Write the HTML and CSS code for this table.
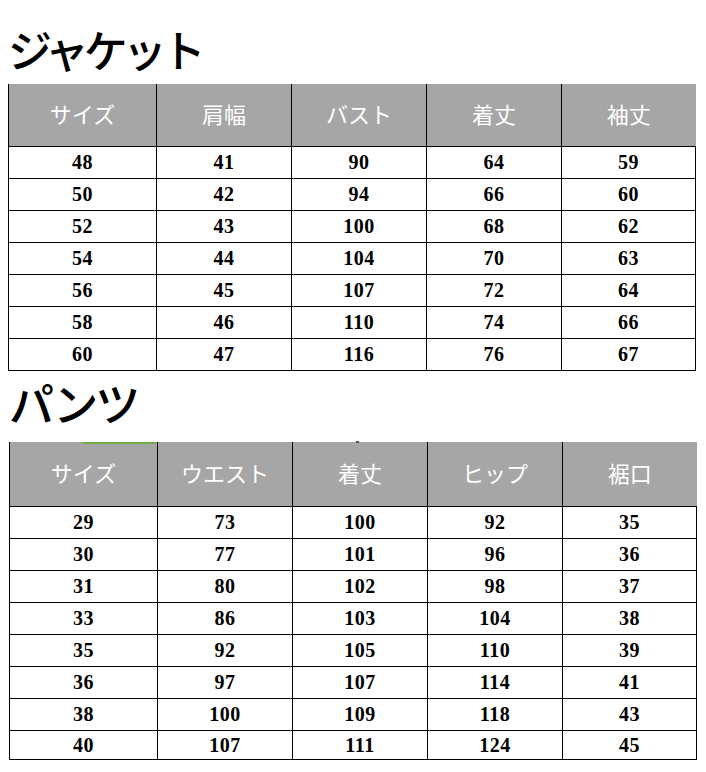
FILE: index.html
```html
<!DOCTYPE html>
<html lang="ja">
<head>
<meta charset="utf-8">
<link rel="stylesheet" href="styles.css">
</head>
<body>
<section class="block jacket">
  <h1 class="title title-jacket">ジャケット</h1>
  <table class="size-table">
    <colgroup><col class="c1"><col class="c2"><col class="c2"><col class="c2"><col class="c5"></colgroup>
    <thead>
      <tr><th>サイズ</th><th>肩幅</th><th>バスト</th><th>着丈</th><th>袖丈</th></tr>
    </thead>
    <tbody>
      <tr><td>48</td><td>41</td><td>90</td><td>64</td><td>59</td></tr>
      <tr><td>50</td><td>42</td><td>94</td><td>66</td><td>60</td></tr>
      <tr><td>52</td><td>43</td><td>100</td><td>68</td><td>62</td></tr>
      <tr><td>54</td><td>44</td><td>104</td><td>70</td><td>63</td></tr>
      <tr><td>56</td><td>45</td><td>107</td><td>72</td><td>64</td></tr>
      <tr><td>58</td><td>46</td><td>110</td><td>74</td><td>66</td></tr>
      <tr><td>60</td><td>47</td><td>116</td><td>76</td><td>67</td></tr>
    </tbody>
  </table>
</section>
<section class="block pants">
  <h1 class="title title-pants">パンツ</h1>
  <div class="table-wrap">
    <span class="green-mark"></span>
    <span class="dark-mark"></span>
    <table class="size-table">
      <colgroup><col class="c1"><col class="c2"><col class="c2"><col class="c2"><col class="c5"></colgroup>
      <thead>
        <tr><th>サイズ</th><th>ウエスト</th><th>着丈</th><th>ヒップ</th><th>裾口</th></tr>
      </thead>
      <tbody>
        <tr><td>29</td><td>73</td><td>100</td><td>92</td><td>35</td></tr>
        <tr><td>30</td><td>77</td><td>101</td><td>96</td><td>36</td></tr>
        <tr><td>31</td><td>80</td><td>102</td><td>98</td><td>37</td></tr>
        <tr><td>33</td><td>86</td><td>103</td><td>104</td><td>38</td></tr>
        <tr><td>35</td><td>92</td><td>105</td><td>110</td><td>39</td></tr>
        <tr><td>36</td><td>97</td><td>107</td><td>114</td><td>41</td></tr>
        <tr><td>38</td><td>100</td><td>109</td><td>118</td><td>43</td></tr>
        <tr class="last"><td>40</td><td>107</td><td>111</td><td>124</td><td>45</td></tr>
      </tbody>
    </table>
  </div>
</section>
</body>
</html>
```
FILE: styles.css
```css
html, body {
  margin: 0;
  padding: 0;
  background: #fff;
}
body {
  width: 706px;
  font-family: "Noto Sans CJK JP", "Noto Sans", sans-serif;
  color: #000;
}
.title {
  margin: 0;
  font-weight: 500;
  color: #000;
  white-space: nowrap;
}
.title-jacket {
  padding: 18px 0 0 8px;
  height: 66px;
  line-height: 62px;
  font-size: 44px;
  letter-spacing: -5px;
}
.title-pants {
  padding: 0 0 0 9px;
  height: 71px;
  line-height: 63px;
  font-size: 45px;
  letter-spacing: -3px;
}
.jacket .size-table {
  margin-left: 8px;
}
.table-wrap {
  position: relative;
  margin-left: 9px;
}
.size-table {
  border-collapse: collapse;
  table-layout: fixed;
  width: 687px;
}
.c1 { width: 148px; }
.c2 { width: 135px; }
.c5 { width: 134px; }
.size-table th {
  background: #a6a6a6;
  color: #fff;
  font-weight: 400;
  font-size: 22px;
  border: 1px solid #000;
  border-top: none;
  padding: 0 0 4px;
  text-align: center;
}
.jacket .size-table th { height: 58px; }
.pants .size-table th { height: 60px; }
.size-table th:last-child {
  border-right: none;
}
.size-table td {
  font-family: "Liberation Serif", "DejaVu Serif", serif;
  font-weight: 700;
  font-size: 20px;
  letter-spacing: 0.5px;
  height: 31px;
  padding: 0;
  line-height: 31px;
  border: 1px solid #000;
  text-align: center;
}
.size-table tr.last td {
  height: 28px;
  line-height: 28px;
}
.green-mark {
  position: absolute;
  left: 74px;
  top: 0;
  width: 73px;
  height: 2px;
  background: #70ad47;
}
.dark-mark {
  position: absolute;
  left: 347px;
  top: -1px;
  width: 3px;
  height: 2px;
  background: #555;
}
```
